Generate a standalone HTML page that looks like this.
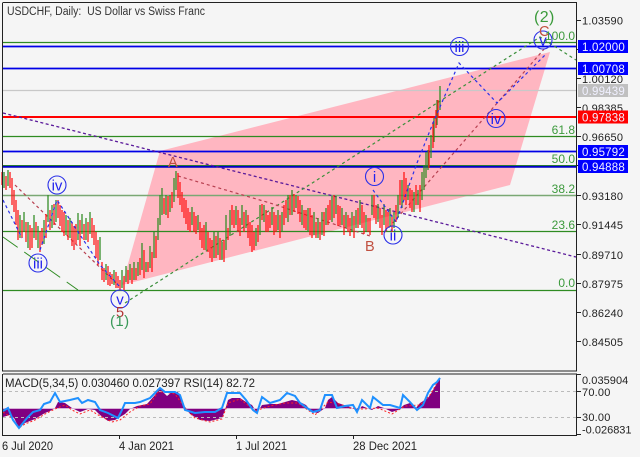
<!DOCTYPE html>
<html><head><meta charset="utf-8"><style>
html,body{margin:0;padding:0;background:#f5f5f5}
svg{display:block}
text{font-family:"Liberation Sans",sans-serif;font-size:11px;fill:#222}
.ax{letter-spacing:.2px}
.tag{fill:#f0f0ff;letter-spacing:.2px;font-size:11.500px}
.w{fill:#2222ee;font-size:15px;text-anchor:middle}
.f{fill:#3c9a3c;font-size:12px;text-anchor:end}
</style></head><body>
<svg width="640" height="457" viewBox="0 0 640 457" xmlns="http://www.w3.org/2000/svg">
<rect width="640" height="457" fill="#f5f5f5"/>
<polygon points="122,285 160,151 550,52 510,185" fill="#ffb6c1"/>
<g stroke="#2e8b22" stroke-width="1.200" fill="none">
<path d="M3 42.500H576M3 136.500H576M3 231.500H576M3 290.500H576"/>
<path d="M3 195.500H576" stroke="#7aa874" stroke-width="1.600"/>
</g>
<path d="M3 90.500H576" stroke="#c8c8c8" stroke-width="1.200"/>
<g fill="none" stroke-width="1.700">
<path d="M3 46.500H576M3 68.500H576M3 151.500H576" stroke="#0000e6"/>
<path d="M3 165.500H576" stroke="#2e8b22" stroke-width="1"/>
<path d="M3 166.800H576" stroke="#0000c8" stroke-width="1.800"/>
<path d="M3 117H576" stroke="#ff0000" stroke-width="2"/>
</g>
<path d="M3 113L576 257" stroke="#5a1a9a" stroke-width="1.300" stroke-dasharray="3 2.500" fill="none"/>
<path d="M3 237L78 290" stroke="#2e8b22" stroke-width="1" stroke-dasharray="18 8" fill="none"/>
<path d="M125 303L540 37L576 60" stroke="#3a8f3a" stroke-width="1.200" stroke-dasharray="3 3" fill="none"/>
<g stroke="#b84050" stroke-width="1.200" stroke-dasharray="3 3" fill="none">
<path d="M15 185L118 285"/>
<path d="M178 176L270 203L370 236"/>
<path d="M385 232L545 48"/>
</g>
<g stroke-width="1.250" fill="none">
<path stroke="#2e8b22" d="M4 172V188M8 170V186M20 215V238M24 212V232M28 222V248M34 215V238M38 226V248M44 220V244M48 195V222M52 205V228M56 200V222M66 215V235M70 218V238M78 213V240M82 214V234M86 218V240M90 212V234M100 237V260M106 264V280M114 270V285M122 270V288M126 266V282M130 264V280M134 262V280M138 262V276M142 243V270M146 262V272M150 246V268M154 232V258M158 218V240M160 195V225M162 188V215M166 195V215M170 195V212M174 178V202M176 171V190M192 207V225M198 215V230M206 222V250M214 232V258M218 232V255M222 242V260M226 215V250M230 210V236M236 206V225M242 205V225M246 210V228M256 228V246M260 205V235M264 205V222M272 207V225M278 210V230M282 212V232M288 195V222M292 190V215M296 195V208M302 205V225M308 208V232M314 212V235M318 218V238M322 212V235M326 208V225M332 196V222M336 196V214M342 208V225M346 212V228M352 212V232M356 210V228M360 200V225M366 215V232M372 195V215M378 204V222M384 204V225M390 208V226M394 212V228M398 195V218M402 180V208M408 185V200M414 192V212M418 190V205M422 172V200M424 165V190M426 152V178M428 150V170M431 135V158M434 118V142M437 100V125M440 86V110"/>
<path stroke="#ff1010" d="M2 172V185M6 176V190M10 172V188M12 178V205M14 190V212M16 200V225M18 210V240M22 220V238M26 222V242M30 225V250M32 228V248M36 222V240M40 232V252M42 228V245M46 214V238M50 210V230M54 204V225M58 200V218M60 205V226M62 210V232M64 212V236M68 220V240M72 222V246M74 226V250M76 224V244M80 220V246M84 224V240M88 222V242M92 218V238M94 225V245M96 232V258M98 240V265M102 262V280M104 268V282M108 266V285M110 272V286M112 274V284M116 272V288M118 276V288M120 280V290M124 276V290M128 270V284M132 268V284M136 268V280M140 258V275M144 250V278M148 262V272M152 252V272M156 236V258M164 198V214M168 196V218M172 192V208M178 173V198M180 182V205M182 192V212M184 198V218M186 200V224M188 208V230M190 212V232M194 212V232M196 216V234M200 222V240M202 228V248M204 225V250M208 232V252M210 238V258M212 240V262M216 236V258M220 238V260M224 240V262M228 228V240M232 205V225M234 210V228M238 210V232M240 218V236M244 212V232M248 215V238M250 222V246M252 225V252M254 232V250M258 225V242M262 204V220M266 210V232M268 215V232M270 212V228M274 212V235M276 215V232M280 215V238M284 205V225M286 200V218M290 195V215M294 194V212M298 196V214M300 200V222M304 210V228M306 210V230M310 208V235M312 215V238M316 222V238M320 222V240M324 212V236M328 205V225M330 200V220M334 195V218M338 205V226M340 206V225M344 215V235M348 215V232M350 218V236M354 216V238M358 208V228M362 205V228M364 212V234M368 218V232M370 218V235M374 195V218M376 205V224M380 208V228M382 215V235M386 210V230M388 212V228M392 215V232M396 205V222M400 180V205M404 172V200M406 178V205M410 188V208M412 190V212M416 185V205M420 185V212M429 145V168M433 122V148M436 110V128M438 100V118"/>
</g>
<g stroke="#2a30e8" stroke-width="1.200" stroke-dasharray="3 3" fill="none">
<path d="M3 200L22 238"/>
<path d="M40 250L57 200L100 265L120 287"/>
<path d="M373 190L396 222L417 163L433 123L459 63L497 103L545 55"/>
</g>
<g fill="none" stroke="#2a30e8" stroke-width="1.100">
<circle cx="57" cy="185" r="9"/><circle cx="38" cy="263" r="9"/><circle cx="120" cy="299" r="9"/>
<circle cx="374.500" cy="176.500" r="9"/><circle cx="393" cy="235" r="9"/>
<circle cx="459.500" cy="46.500" r="9"/><circle cx="496" cy="118.500" r="9"/><circle cx="543" cy="40" r="9"/>
</g>
<text class="w" x="57" y="190.500">iv</text><text class="w" x="38" y="268.500">iii</text><text class="w" x="120" y="304.500">v</text>
<text class="w" x="374.500" y="182">i</text><text class="w" x="393" y="240.500">ii</text>
<text class="w" x="459.500" y="52">iii</text><text class="w" x="496" y="124">iv</text><text class="w" x="543" y="45.500">v</text>
<text x="168" y="167" style="fill:#c05040;font-size:14.500px">A</text>
<text x="365" y="251" style="fill:#c05040;font-size:14.500px">B</text>
<text x="539" y="36" style="fill:#c05040;font-size:14.500px">C</text>
<text x="116" y="317" style="fill:#b03030;font-size:14.500px">5</text>
<text x="110" y="326" style="fill:#3a9a5a;font-size:15px;letter-spacing:.4px">(1)</text>
<text x="534" y="22" style="fill:#3a9a3a;font-size:16px;letter-spacing:.4px">(2)</text>
<text class="f" x="575" y="40">100.0</text><text class="f" x="575" y="134">61.8</text><text class="f" x="575" y="163">50.0</text>
<text class="f" x="575" y="193">38.2</text><text class="f" x="575" y="229">23.6</text><text class="f" x="575" y="287">0.0</text>
<text x="7" y="15" textLength="198" lengthAdjust="spacingAndGlyphs" style="font-size:11.500px;fill:#333" xml:space="preserve">USDCHF, Daily:  US Dollar vs Swiss Franc</text>

<path d="M3 408.500V417L10 415L14 418L19 428L25 423L35 419L45 413L50 411L55 408L58 402L65 403L72 408L80 412L88 409L95 410L100 415L108 421L115 420L125 414L130 409L137 406L147 404L155 395L160 387L163 392L167 396L172 392L178 392L183 405L186 408L190 414L200 420L210 421L222 418L225 410L228 400L232 398L240 398L246 402L252 405L257 413L262 405L270 404L278 404L285 402L292 400L300 402L306 405L312 412L318 413L325 408L328 400L332 397L338 403L344 405L350 407L358 411L362 406L372 410L378 406L384 408L392 412L398 410L404 405L410 403L416 408L420 403L428 398L432 392L436 385L440 378V408.500Z" fill="#800080"/>
<path d="M3 408.500H440" stroke="#d8b0d8" stroke-width="1"/>
<path d="M3 391.500H576M3 417.500H576" stroke="#bbb" stroke-width=".9" stroke-dasharray="3 3"/>
<path d="M3 412L12 418L19 428L25 424L35 420L45 414L55 409L65 405L72 410L80 414L90 410L100 416L112 422L120 420L130 412L140 406L150 404L158 392L165 392L175 394L185 408L195 418L210 422L222 419L228 403L240 399L255 411L270 406L285 403L298 403L315 415L328 402L340 404L350 408L362 409L378 408L392 414L405 406L420 405L430 395L440 378" fill="none" stroke="#ff2020" stroke-width="1" stroke-dasharray="2 2"/>
<path d="M3 411L8 408L13 420L19 428L27 418L33 412L40 410L44 404L50 402L55 393L60 402L70 400L78 398L82 403L88 400L95 402L100 410L108 413L118 418L122 410L125 403L135 403L140 402L150 398L160 388L165 392L175 392L180 395L185 410L195 413L205 412L215 412L222 408L227 393L235 393L240 393L246 400L253 410L257 413L262 397L270 403L280 400L287 393L295 396L300 403L307 408L313 412L320 410L325 395L332 395L337 408L345 406L353 405L357 412L362 400L370 408L373 397L383 405L390 405L400 408L403 395L410 402L417 410L423 405L428 393L433 385L437 382L440 378" fill="none" stroke="#1e90ff" stroke-width="2"/>
<path d="M3 2.500H576.500V371H2.500V2.500M3 374H576.500V435.500H2.500V374" fill="none" stroke="#222" stroke-width="1"/>
<g stroke="#222" stroke-width="1" fill="none">
<path d="M577 20.500H581M577 49.500H581M577 78.500H581M577 107.500H581M577 136.500H581M577 165.500H581M577 195.500H581M577 224.500H581M577 254.500H581M577 283.500H581M577 312.500H581M577 341.500H581"/>
<path d="M577 374.500H581M577 391.500H581M577 417.500H581M577 434.500H581"/>
<path d="M119.500 436V439M236.500 436V439M353.500 436V439"/>
</g>
<text class="ax" x="582" y="24.500">1.03590</text>
<text class="ax" x="582" y="83">1.00120</text>
<text class="ax" x="582" y="112">0.98385</text>
<text class="ax" x="582" y="141">0.96650</text>
<text class="ax" x="582" y="200">0.93180</text>
<text class="ax" x="582" y="229">0.91445</text>
<text class="ax" x="582" y="259">0.89710</text>
<text class="ax" x="582" y="288">0.87975</text>
<text class="ax" x="582" y="317">0.86240</text>
<text class="ax" x="582" y="346">0.84505</text>
<text x="582" y="384" style="letter-spacing:.05px">0.035904</text>
<text class="ax" x="582" y="396">70.00</text>
<text class="ax" x="582" y="421">30.00</text>
<text x="582" y="433.500">-0.026831</text>
<rect x="578" y="40" width="50" height="13" fill="#0000ff"/><text class="tag" x="582" y="51">1.02000</text>
<rect x="578" y="62" width="50" height="13" fill="#0000ff"/><text class="tag" x="582" y="73">1.00708</text>
<rect x="578" y="84" width="50" height="13" fill="#c0c0c0"/><text class="tag" x="582" y="95">0.99439</text>
<rect x="578" y="110.500" width="50" height="13" fill="#ff0000"/><text class="tag" x="582" y="121.500">0.97838</text>
<rect x="578" y="145" width="50" height="13" fill="#0000ff"/><text class="tag" x="582" y="156">0.95792</text>
<rect x="578" y="160" width="50" height="13" fill="#0000ff"/><text class="tag" x="582" y="171">0.94888</text>
<text x="5" y="387" textLength="250" lengthAdjust="spacingAndGlyphs" style="font-size:11.500px">MACD(5,34,5) 0.030460 0.027397 RSI(14) 82.72</text>
<text x="2" y="450" textLength="51" lengthAdjust="spacingAndGlyphs" style="font-size:11.500px">6 Jul 2020</text>
<text x="119" y="450" textLength="55" lengthAdjust="spacingAndGlyphs" style="font-size:11.500px">4 Jan 2021</text>
<text x="236" y="450" textLength="51" lengthAdjust="spacingAndGlyphs" style="font-size:11.500px">1 Jul 2021</text>
<text x="353" y="450" textLength="64" lengthAdjust="spacingAndGlyphs" style="font-size:11.500px">28 Dec 2021</text>
</svg>
</body></html>
